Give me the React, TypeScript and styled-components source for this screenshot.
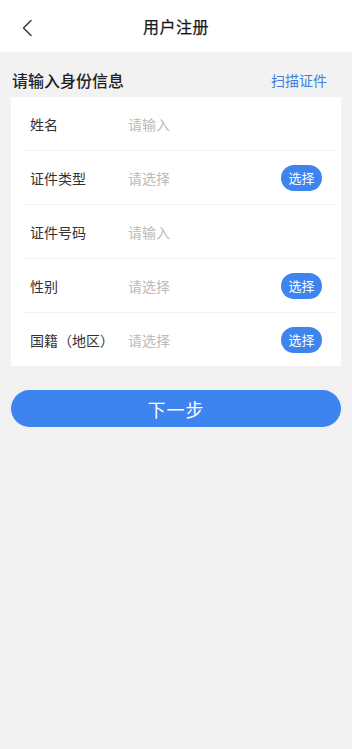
import React from 'react'
import styled, { createGlobalStyle } from 'styled-components'

const GlobalStyle = createGlobalStyle`
  html, body {
    margin: 0;
    padding: 0;
    background: #f2f2f2;
  }
  body {
    font-family: 'Noto Sans CJK SC', 'Noto Sans', sans-serif;
  }
`

interface IField {
  label: string
  placeholder: string
  select?: boolean
}

const fields: IField[] = [
  { label: '姓名', placeholder: '请输入' },
  { label: '证件类型', placeholder: '请选择', select: true },
  { label: '证件号码', placeholder: '请输入' },
  { label: '性别', placeholder: '请选择', select: true },
  { label: '国籍（地区）', placeholder: '请选择', select: true },
]

export default function App(): JSX.Element {
  return (
    <Page>
      <GlobalStyle />
      <Header>
        <Back>
          <svg width="12" height="18" viewBox="0 0 12 18" fill="none">
            <path d="M10 1.5L2.5 9L10 16.5" stroke="#333" strokeWidth="1.4" strokeLinecap="round" strokeLinejoin="round" />
          </svg>
        </Back>
        <Title>用户注册</Title>
      </Header>

      <SectionHead>
        <SectionTitle>请输入身份信息</SectionTitle>
        <ScanLink>扫描证件</ScanLink>
      </SectionHead>

      <Card>
        {fields.map((f, i) => (
          <Row key={f.label} $last={i === fields.length - 1}>
            <Label>{f.label}</Label>
            <Placeholder>{f.placeholder}</Placeholder>
            {f.select && <PickButton>选择</PickButton>}
          </Row>
        ))}
      </Card>

      <NextButton>下一步</NextButton>
    </Page>
  )
}

const Page = styled.div`
  min-height: 749px;
  background: #f2f2f2;
`

const Header = styled.div`
  position: relative;
  height: 52px;
  background: #fff;
  display: flex;
  align-items: center;
  justify-content: center;
`

const Back = styled.div`
  position: absolute;
  left: 21px;
  top: 19px;
  display: flex;
`

const Title = styled.div`
  font-size: 16px;
  color: #1a1a1a;
  font-weight: 400;
  letter-spacing: 0.5px;
  -webkit-text-stroke: 0.25px #1a1a1a;
`

const SectionHead = styled.div`
  display: flex;
  align-items: center;
  justify-content: space-between;
  height: 34px;
  padding: 11px 25px 0 12px;
`

const SectionTitle = styled.div`
  font-size: 16px;
  font-weight: 500;
  color: #222;
`

const ScanLink = styled.div`
  font-size: 14px;
  color: #3d7fe0;
`

const Card = styled.div`
  margin: 0 11px;
  background: #fff;
  padding: 0 5px 0 11px;
`

const Row = styled.div<{ $last?: boolean }>`
  display: flex;
  align-items: center;
  height: 53px;
  border-bottom: ${(p) => (p.$last ? 'none' : '1px solid #f2f2f2')};
  padding: 0 14px 0 8px;
`

const Label = styled.div`
  width: 98px;
  font-size: 14px;
  color: #333;
  white-space: nowrap;
`

const Placeholder = styled.div`
  flex: 1;
  font-size: 14px;
  color: #bbb;
`

const PickButton = styled.div`
  width: 41px;
  height: 26px;
  border-radius: 13px;
  background: #3d84ee;
  color: #fff;
  font-size: 13px;
  display: flex;
  align-items: center;
  justify-content: center;
`

const NextButton = styled.div`
  margin: 24px 11px 0;
  height: 37px;
  border-radius: 19px;
  background: #3d84ee;
  color: #fff;
  font-size: 18px;
  display: flex;
  align-items: center;
  justify-content: center;
  letter-spacing: 1px;
`
